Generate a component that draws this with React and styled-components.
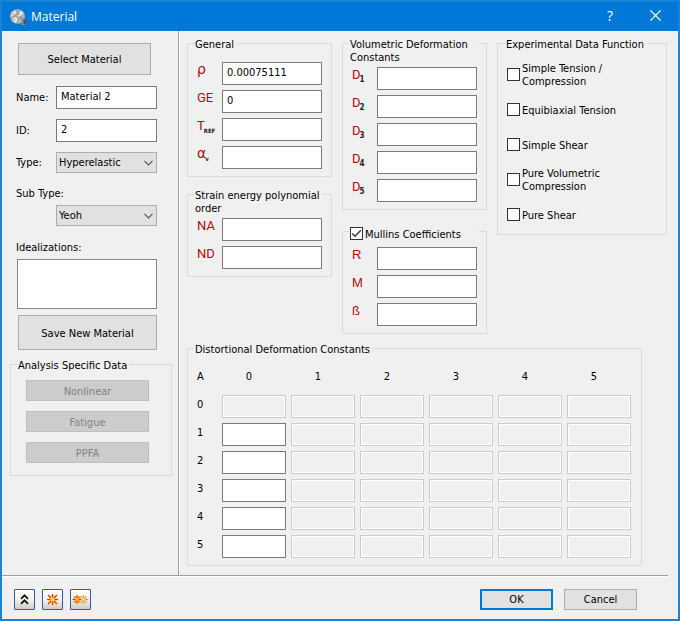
import React from "react";
import styled, { createGlobalStyle, css } from "styled-components";

const GlobalStyle = createGlobalStyle`
  *, *::before, *::after { box-sizing: border-box; }
  body { margin: 0; background: #f0f0f0; }
  body, button, input, select, textarea {
    font-family: "DejaVu Sans Condensed", "DejaVu Sans", "Noto Sans", sans-serif;
    font-size: 11px;
    line-height: 13px;
    color: #000;
  }
`;

const Dialog = styled.main`
  min-height: 100vh;
  display: flex;
  flex-direction: column;
  border: 2px solid #1883d7;
  background: #f0f0f0;
`;

const TitleBar = styled.header`
  display: flex;
  align-items: center;
  height: 29px;
  padding: 0 3px 0 8px;
  gap: 5px;
  background: #0078d7;
  color: #fff;
`;

const Title = styled.h1`
  margin: 0;
  flex: 1;
  font: 400 12px/16px "Open Sans", "Noto Sans", sans-serif;
`;

const TitleButton = styled.button`
  display: grid;
  place-items: center;
  width: 40px;
  height: 28px;
  padding: 0 0 2px;
  border: 0;
  background: transparent;
  color: #fff;
  font: 400 14px/16px "Open Sans", sans-serif;
`;

const Body = styled.div`
  flex: 1;
  display: flex;
`;

const Sidebar = styled.aside`
  width: 178px;
  flex: none;
  display: flex;
  flex-direction: column;
  padding: 12px 0 0;
  border-right: 1px solid #fff;
  box-shadow: inset -1px 0 #a0a0a0;
`;

const Button = styled.button`
  height: ${(p) => p.$height || 21}px;
  width: ${(p) => (p.$width ? p.$width + "px" : "auto")};
  padding: 1px 0 0;
  border: ${(p) => (p.$primary ? "2px solid #0078d7" : "1px solid #adadad")};
  background: #e1e1e1;
  &:disabled {
    border-color: #bfbfbf;
    background: #ccc;
    color: #838383;
  }
`;

const SelectMaterial = styled(Button)`
  margin: 0 28px 0 16px;
`;

const SaveMaterial = styled(Button)`
  margin: 6px 22px 8px 16px;
`;

const Properties = styled.div`
  display: grid;
  grid-template-columns: 40px 1fr;
  align-items: center;
  row-gap: 10px;
  margin: 11px 22px 0 14px;
`;

const SubTypeBlock = styled.div`
  display: grid;
  row-gap: 5px;
  margin: 14px 22px 0 14px;
`;

const Indented = styled.div`
  padding-left: 40px;
`;

const Input = styled.input`
  width: 100%;
  min-width: 0;
  height: 23px;
  padding: 0 4px 2px;
  border: 1px solid #7a7a7a;
  border-radius: 0;
  background: #fff;
  display: block;
  &:disabled {
    border-color: #ccc;
    background: #f0f0f0;
    box-shadow: inset 0 0 0 1px #fff;
  }
`;

const Notes = styled.textarea`
  display: block;
  height: 50px;
  margin: 5px 22px 0 15px;
  border: 1px solid #828790;
  border-radius: 0;
  resize: none;
`;

const NotesLabel = styled.label`
  margin: 15px 22px 0 14px;
`;

const Overlay = styled.span`
  display: grid;
  align-items: center;
  > * { grid-area: 1 / 1; }
  > svg {
    justify-self: end;
    margin-right: ${(p) => p.$inset || 0}px;
    pointer-events: none;
  }
`;

const SelectBox = styled.select`
  appearance: none;
  width: 100%;
  height: 21px;
  padding: 0 16px 0 2px;
  border: 1px solid #adadad;
  border-radius: 0;
  background: #e1e1e1;
`;

const Group = styled.fieldset`
  min-width: 0;
  margin: 0;
  padding: ${(p) => p.$pad || "12px 9px 7px 8px"};
  border: 1px solid #dcdcdc;
`;

const Legend = styled.legend`
  height: 13px;
  margin-left: -2px;
  padding: 1px 2px 0 1px;
  width: ${(p) => (p.$wide ? "calc(100% + 3px)" : "auto")};
  ${(p) => p.$nowrap && css`white-space: nowrap;`}
`;

const AnalysisLegend = styled(Legend)`
  margin-left: -9px;
`;

const AnalysisGroup = styled(Group)`
  margin: 0 7px 0 8px;
`;

const ButtonStack = styled.div`
  display: grid;
  gap: 10px;
`;

const Content = styled.section`
  flex: 1;
  min-width: 0;
  padding: 6px 11px 9px 7px;
`;

const Columns = styled.div`
  display: grid;
  grid-template-columns: 145fr 145fr 170fr;
  gap: 10px;
  align-items: start;
`;

const Column = styled.div`
  display: grid;
  gap: ${(p) => p.$gap || 0}px;
`;

const Fields = styled.div`
  display: grid;
  gap: 5px;
`;

const FieldRow = styled.div`
  display: grid;
  grid-template-columns: 26px 1fr;
`;

const symbolFonts = {
  normal: "400 13px/15px Roboto",
  light: "400 13px/15px 'Liberation Sans'",
  greek: "400 14px/15px 'DejaVu Sans'",
};

const Symbol = styled.label`
  height: 23px;
  padding-left: 1px;
  color: #b40a0a;
  white-space: nowrap;
  font: ${(p) => symbolFonts[p.$face || "normal"]}, sans-serif;
`;

const Sub = styled.sub`
  margin-left: -1px;
  color: #222;
  font: 700 ${(p) => p.$size || 8}px/8px "DejaVu Sans Condensed", sans-serif;
  vertical-align: -3px;
`;

const CheckLabel = styled.label`
  display: flex;
  align-items: center;
  gap: 2px;
  height: ${(p) => p.$height || 35}px;
`;

const CheckText = styled.span`
  padding-top: 1px;
`;

const CheckInput = styled.input`
  appearance: none;
  width: 13px;
  height: 13px;
  margin: 0;
  border: 1px solid #333;
  background: #fff;
  & + svg { visibility: hidden; }
  &:checked + svg { visibility: visible; }
`;

const Matrix = styled.table`
  width: 100%;
  table-layout: fixed;
  border-collapse: collapse;
  th, td { padding: 0 5px 5px 0; font-weight: 400; }
  thead th { height: 40px; padding: 2px 15px 0 0; text-align: center; }
  tr > th:first-child { width: 26px; text-align: left; padding: 0 0 10px 1px; }
  thead tr > th:first-child { padding: 2px 0 0 1px; }
`;

const MatrixGroup = styled(Group)`
  margin: 8px 25px 0 0;
`;

const Footer = styled.footer`
  display: flex;
  align-items: center;
  height: 44px;
  margin-right: 10px;
  padding: 3px 31px 0 12px;
  border-top: 1px solid #a0a0a0;
  box-shadow: inset 0 1px #fff;
`;

const ToolGroup = styled.div`
  display: flex;
  flex: 1;
  gap: 7px;
`;

const Actions = styled.div`
  display: flex;
  gap: 11px;
`;

const ToolButton = styled.button`
  display: grid;
  place-items: center;
  width: 21px;
  height: 21px;
  padding: 0;
  border: 1px solid #2a5db0;
  border-radius: 1px;
  background: linear-gradient(#fff, #f4f3f0 50%, #d0ccc2);
`;

const Chevron = () => (
  <svg width="9" height="6" viewBox="0 0 9 6" fill="none" stroke="#555" strokeWidth="1.2">
    <path d="M.5 .8 4.5 4.8 8.5 .8" />
  </svg>
);

const Select = ({ id, value }) => (
  <Overlay $inset={4}>
    <SelectBox id={id} defaultValue={value}>
      <option>{value}</option>
    </SelectBox>
    <Chevron />
  </Overlay>
);

const Check = ({ label, checked, height }) => (
  <CheckLabel $height={height}>
    <Overlay>
      <CheckInput type="checkbox" defaultChecked={checked} />
      <svg width="13" height="13" viewBox="0 0 13 13" fill="none" stroke="#333" strokeWidth="1.3">
        <path d="M2.2 6.5 5 9.3 10.8 3.3" />
      </svg>
    </Overlay>
    <CheckText>{label}</CheckText>
  </CheckLabel>
);

const Field = ({ id, symbol, sub, subSize, value, face }) => (
  <FieldRow>
    <Symbol htmlFor={id} $face={face}>
      {symbol}
      {sub && <Sub $size={subSize}>{sub}</Sub>}
    </Symbol>
    <Input id={id} defaultValue={value} />
  </FieldRow>
);

const MaterialIcon = () => (
  <svg width="16" height="16" viewBox="0 0 16 16">
    <circle cx="7.5" cy="7.5" r="7.3" fill="#b9b9b9" />
    <path d="M1.5 4 5 1.5 6.5 3 4 6.5 1 8zM8 4l3-2 3 3-2 2-3 1zM3 9l3-2 2 3-2 4-3-2z" fill="#e4e4e0" />
    <path d="M6 1 8 4 5 7 1 9M5 7l4 3-2 4M9 7l2 2 2-4M2 5l2 1M10 1l-2 3 2 2M3 11l2-1" fill="none" stroke="#808080" strokeWidth=".8" />
    <path d="M10.5 9.5h5V16h-5l2-3z" fill="#34465c" />
    <path d="M15 10.2h-3.5l2 2.6-2 2.4H15" fill="none" stroke="#c5ccd4" strokeWidth=".8" />
  </svg>
);

const CloseIcon = () => (
  <svg width="11" height="11" viewBox="0 0 11 11" stroke="#fff" strokeWidth="1.1">
    <path d="M.5.5l10 10M10.5.5l-10 10" />
  </svg>
);

const CollapseIcon = () => (
  <svg width="9" height="11" viewBox="0 0 9 11" fill="none" stroke="#111" strokeWidth="1.7">
    <path d="M1 4.8 4.5 1.3 8 4.8M1 9.8 4.5 6.3 8 9.8" />
  </svg>
);

const BurstIcon = () => (
  <svg width="13" height="13" viewBox="0 0 13 13">
    <circle cx="6.5" cy="6.5" r="4.5" fill="#ffd65c" />
    <path d="M6.5 1v3.5M6.5 8.5V12M1 6.5h3.5M8.5 6.5H12M2 2l3 3M8 8l3 3M11 2 8 5M5 8l-3 3" stroke="#f5280c" strokeWidth="1.1" />
  </svg>
);

const DoubleBurstIcon = () => (
  <svg width="17" height="11" viewBox="0 0 17 11">
    <circle cx="11.5" cy="5.5" r="4" fill="#f5dc98" />
    <path d="M11.5 1v3M11.5 7v3M13 5.5h3.5M8.5 2.5l2 2M12.5 6.5l2 2M14.5 2.5l-2 2M10.5 6.5l-2 2" stroke="#cf9278" />
    <circle cx="5" cy="5.5" r="4" fill="#ffd04a" />
    <path d="M5 1v3M5 7v3M.5 5.5h3M6.5 5.5H9M2 2.5l2 2M6 6.5l2 2M8 2.5l-2 2M4 6.5l-2 2" stroke="#f5280c" />
  </svg>
);

const INDICES = [0, 1, 2, 3, 4, 5];

export default function App() {
  return (
    <>
      <GlobalStyle />
      <Dialog>
        <TitleBar>
          <MaterialIcon />
          <Title>Material</Title>
          <TitleButton aria-label="Help">?</TitleButton>
          <TitleButton aria-label="Close"><CloseIcon /></TitleButton>
        </TitleBar>
        <Body>
          <Sidebar>
            <SelectMaterial $height={32}>Select Material</SelectMaterial>
            <Properties>
              <label htmlFor="name">Name:</label>
              <Input id="name" defaultValue="Material 2" />
              <label htmlFor="id">ID:</label>
              <Input id="id" defaultValue="2" />
              <label htmlFor="type">Type:</label>
              <Select id="type" value="Hyperelastic" />
            </Properties>
            <SubTypeBlock>
              <label htmlFor="subtype">Sub Type:</label>
              <Indented><Select id="subtype" value="Yeoh" /></Indented>
            </SubTypeBlock>
            <NotesLabel htmlFor="idealizations">Idealizations:</NotesLabel>
            <Notes id="idealizations" />
            <SaveMaterial $height={35}>Save New Material</SaveMaterial>
            <AnalysisGroup $pad="9px 22px 12px 15px">
              <AnalysisLegend>Analysis Specific Data</AnalysisLegend>
              <ButtonStack>
                <Button disabled>Nonlinear</Button>
                <Button disabled>Fatigue</Button>
                <Button disabled>PPFA</Button>
              </ButtonStack>
            </AnalysisGroup>
          </Sidebar>
          <Content>
            <Columns>
              <Column $gap={11}>
                <Group>
                  <Legend>General</Legend>
                  <Fields>
                    <Field id="rho" symbol="ρ" face="greek" value="0.00075111" />
                    <Field id="ge" symbol="GE" value="0" />
                    <Field id="tref" symbol="T" sub="REF" subSize={6} />
                    <Field id="alpha" symbol="α" face="greek" sub="v" subSize={6} />
                  </Fields>
                </Group>
                <Group $pad="17px 9px 7px 8px">
                  <Legend $wide>Strain energy polynomial order</Legend>
                  <Fields>
                    <Field id="na" symbol="NA" />
                    <Field id="nd" symbol="ND" />
                  </Fields>
                </Group>
              </Column>
              <Column $gap={15}>
                <Group $pad="17px 9px 7px 8px">
                  <Legend $wide>Volumetric Deformation Constants</Legend>
                  <Fields>
                    {[1, 2, 3, 4, 5].map((n) => (
                      <Field key={n} id={"d" + n} symbol="D" sub={n} />
                    ))}
                  </Fields>
                </Group>
                <Group $pad="9px 9px 7px 8px">
                  <Legend $wide><Check label="Mullins Coefficients" checked height={15} /></Legend>
                  <Fields>
                    <Field id="r" symbol="R" face="light" />
                    <Field id="m" symbol="M" face="light" />
                    <Field id="beta" symbol="ß" face="light" />
                  </Fields>
                </Group>
              </Column>
              <Group $pad="7px 30px 2px 9px">
                <Legend $nowrap>Experimental Data Function</Legend>
                <Check label="Simple Tension / Compression" />
                <Check label="Equibiaxial Tension" />
                <Check label="Simple Shear" />
                <Check label="Pure Volumetric Compression" />
                <Check label="Pure Shear" />
              </Group>
            </Columns>
            <MatrixGroup $pad="0 5px 2px 8px">
              <Legend>Distortional Deformation Constants</Legend>
              <Matrix>
                <thead>
                  <tr>
                    <th scope="col">A</th>
                    {INDICES.map((c) => <th scope="col" key={c}>{c}</th>)}
                  </tr>
                </thead>
                <tbody>
                  {INDICES.map((r) => (
                    <tr key={r}>
                      <th scope="row">{r}</th>
                      {INDICES.map((c) => (
                        <td key={c}>
                          <Input aria-label={`A ${r} ${c}`} disabled={c > 0 || r === 0} />
                        </td>
                      ))}
                    </tr>
                  ))}
                </tbody>
              </Matrix>
            </MatrixGroup>
          </Content>
        </Body>
        <Footer>
          <ToolGroup>
            <ToolButton aria-label="Collapse"><CollapseIcon /></ToolButton>
            <ToolButton aria-label="Highlight"><BurstIcon /></ToolButton>
            <ToolButton aria-label="Highlight all"><DoubleBurstIcon /></ToolButton>
          </ToolGroup>
          <Actions>
            <Button $primary $width={73}>OK</Button>
            <Button $width={73}>Cancel</Button>
          </Actions>
        </Footer>
      </Dialog>
    </>
  );
}
